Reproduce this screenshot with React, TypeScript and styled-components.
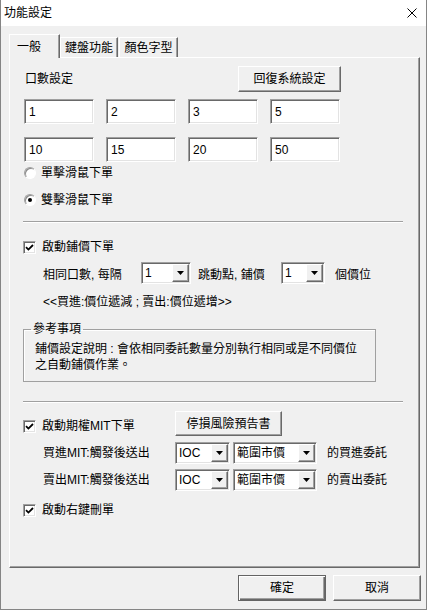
import React from 'react';
import styled, { createGlobalStyle, css } from 'styled-components';

const GlobalStyle = createGlobalStyle`
  html, body {
    margin: 0;
    padding: 0;
    background: #f0f0f0;
  }
  body {
    font-family: "Liberation Sans", "Noto Sans CJK TC", sans-serif;
    font-size: 12px;
    line-height: 16px;
    color: #000;
  }
  * {
    box-sizing: border-box;
  }
`;

const raised = css`
  border: 1px solid;
  border-color: #ffffff #696969 #696969 #ffffff;
  box-shadow: inset -1px -1px #a0a0a0;
`;

const sunken = css`
  border: 1px solid;
  border-color: #a0a0a0 #ffffff #ffffff #a0a0a0;
  box-shadow: inset 1px 1px #696969, inset -1px -1px #e3e3e3;
`;

const Window = styled.div`
  width: 427px;
  height: 610px;
  display: flex;
  flex-direction: column;
  background: #f0f0f0;
  border: 1px solid #858585;
  border-top: none;
`;

const TitleBar = styled.div`
  height: 26px;
  flex: none;
  display: flex;
  align-items: center;
  justify-content: space-between;
  padding: 0 9px 0 3px;
  background: #ffffff;
`;

const Body = styled.div`
  flex: 1;
  display: flex;
  flex-direction: column;
  padding: 8px 6px 0 8px;
`;

const TabStrip = styled.div`
  height: 23px;
  display: flex;
  align-items: flex-end;
  position: relative;
  z-index: 1;
`;

const Tab = styled.div<{ $w: number; $active?: boolean; $ml?: number }>`
  width: ${(p) => p.$w}px;
  height: 20px;
  margin-left: ${(p) => p.$ml ?? 0}px;
  display: flex;
  align-items: center;
  justify-content: center;
  background: #f0f0f0;
  border-top: 1px solid #ffffff;
  border-left: 1px solid #ffffff;
  border-right: 1px solid #696969;
  box-shadow: inset -1px 0 #a0a0a0;
  ${(p) =>
    p.$active &&
    css`
      height: 24px;
      margin-bottom: -1px;
      justify-content: flex-start;
      padding-left: 7px;
    `}
`;

const Panel = styled.div`
  height: 511px;
  display: flex;
  flex-direction: column;
  padding: 8px 0 0 13px;
  ${raised}
`;

const Row = styled.div<{ $mt: number; $h?: number; $pl?: number }>`
  display: flex;
  align-items: center;
  margin-top: ${(p) => p.$mt}px;
  height: ${(p) => p.$h ?? 16}px;
  padding-left: ${(p) => p.$pl ?? 0}px;
`;

const Label = styled.span<{ $w?: number; $ml?: number; $dy?: number }>`
  flex: none;
  white-space: nowrap;
  width: ${(p) => (p.$w ? `${p.$w}px` : 'auto')};
  margin-left: ${(p) => p.$ml ?? 0}px;
  padding-top: ${(p) => p.$dy ?? 0}px;
`;

const Button = styled.div<{ $w: number; $h: number; $default?: boolean }>`
  width: ${(p) => p.$w}px;
  height: ${(p) => p.$h}px;
  flex: none;
  display: flex;
  align-items: center;
  justify-content: center;
  background: #f0f0f0;
  ${raised}
  ${(p) =>
    p.$default &&
    css`
      border: 1px solid #646464;
      box-shadow: inset 1px 1px #ffffff, inset -1px -1px #696969, inset -2px -2px #a0a0a0;
    `}
`;

const InputGrid = styled.div`
  display: grid;
  grid-template-columns: repeat(4, 70px);
  grid-auto-rows: 25px;
  column-gap: 12px;
  row-gap: 13px;
  margin: 7px 0 0 1px;
`;

const TextBox = styled.div`
  display: flex;
  align-items: center;
  padding-left: 4px;
  background: #ffffff;
  ${sunken}
`;

const RadioCircle = styled.span<{ $checked?: boolean }>`
  width: 12px;
  height: 12px;
  flex: none;
  margin-left: 1px;
  border-radius: 50%;
  display: flex;
  align-items: center;
  justify-content: center;
  background: #ffffff;
  border: 1px solid;
  border-color: #a0a0a0 #ffffff #ffffff #a0a0a0;
  box-shadow: inset 1px 1px #8a8a8a;
  &::after {
    content: '';
    width: 4px;
    height: 4px;
    border-radius: 50%;
    background: ${(p) => (p.$checked ? '#000' : 'transparent')};
  }
`;

const CheckBox = styled.span`
  width: 13px;
  height: 13px;
  flex: none;
  display: flex;
  align-items: center;
  justify-content: center;
  background: #ffffff;
  ${sunken}
`;

const CheckItem = styled.div<{ $w?: number; $dy?: number }>`
  display: flex;
  align-items: center;
  gap: 6px;
  width: ${(p) => (p.$w ? `${p.$w}px` : 'auto')};
  padding-top: ${(p) => p.$dy ?? 0}px;
  flex: none;
`;

const RadioItem = styled.div`
  display: flex;
  align-items: center;
  gap: 5px;
`;

const Separator = styled.div<{ $mt: number }>`
  width: 380px;
  height: 2px;
  margin-top: ${(p) => p.$mt}px;
  border-top: 1px solid #a0a0a0;
  border-bottom: 1px solid #ffffff;
`;

const Combo = styled.div<{ $w: number; $ml?: number }>`
  width: ${(p) => p.$w}px;
  height: 22px;
  margin-left: ${(p) => p.$ml ?? 0}px;
  flex: none;
  display: flex;
  background: #ffffff;
  padding: 1px;
  ${sunken}
`;

const ComboValue = styled.span`
  flex: 1;
  display: flex;
  align-items: center;
  padding-left: 2px;
  white-space: nowrap;
  overflow: hidden;
`;

const ComboButton = styled.span`
  width: 17px;
  flex: none;
  display: flex;
  align-items: center;
  justify-content: center;
  background: #f0f0f0;
  ${raised}
`;

const GroupBox = styled.fieldset`
  width: 353px;
  height: 61px;
  margin: 11px 0 0 0;
  padding: 4px 0 0 7px;
  border: 1px solid #a0a0a0;
  box-shadow: inset 1px 1px #ffffff;
  min-inline-size: 0;
`;

const Legend = styled.legend`
  padding: 0 2px;
  line-height: 16px;
`;

const GroupText = styled.div`
  margin-left: 4px;
  line-height: 16px;
`;

const Footer = styled.div`
  display: flex;
  justify-content: flex-end;
  gap: 7px;
  margin: 7px -1px 0 0;
`;

const Triangle = () => (
  <svg width="7" height="4" viewBox="0 0 7 4">
    <polygon points="0,0 7,0 3.5,4" fill="#000" />
  </svg>
);

const Check = () => (
  <svg width="9" height="9" viewBox="0 0 9 9">
    <path d="M1 4.2 L3.4 6.6 L8 2" stroke="#000" strokeWidth="1.8" fill="none" />
  </svg>
);

const Dropdown = ({ w, value, ml }: { w: number; value: string; ml?: number }) => (
  <Combo $w={w} $ml={ml}>
    <ComboValue>{value}</ComboValue>
    <ComboButton>
      <Triangle />
    </ComboButton>
  </Combo>
);

const CheckLabel = ({ text, w, dy }: { text: string; w?: number; dy?: number }) => (
  <CheckItem $w={w} $dy={dy}>
    <CheckBox>
      <Check />
    </CheckBox>
    <span>{text}</span>
  </CheckItem>
);

const quantities = ['1', '2', '3', '5', '10', '15', '20', '50'];

export default function App() {
  return (
    <>
      <GlobalStyle />
      <Window>
        <TitleBar>
          <span>功能設定</span>
          <svg width="10" height="10" viewBox="0 0 10 10">
            <path d="M0.5 0.5 L9.5 9.5 M9.5 0.5 L0.5 9.5" stroke="#000" strokeWidth="1" />
          </svg>
        </TitleBar>
        <Body>
          <TabStrip>
            <Tab $w={51} $active>
              一般
            </Tab>
            <Tab $w={58}>鍵盤功能</Tab>
            <Tab $w={59} $ml={1}>
              顏色字型
            </Tab>
          </TabStrip>
          <Panel>
            <Row $mt={0} $h={26}>
              <Label $w={213} $ml={2}>
                口數設定
              </Label>
              <Button $w={103} $h={26}>
                回復系統設定
              </Button>
            </Row>
            <InputGrid>
              {quantities.map((q) => (
                <TextBox key={q}>{q}</TextBox>
              ))}
            </InputGrid>
            <Row $mt={3}>
              <RadioItem>
                <RadioCircle />
                <span>單擊滑鼠下單</span>
              </RadioItem>
            </Row>
            <Row $mt={11}>
              <RadioItem>
                <RadioCircle $checked />
                <span>雙擊滑鼠下單</span>
              </RadioItem>
            </Row>
            <Separator $mt={13} />
            <Row $mt={16}>
              <CheckLabel text="啟動鋪價下單" />
            </Row>
            <Row $mt={7} $h={22} $pl={20}>
              <Label $w={98} $dy={3}>
                相同口數, 每隔
              </Label>
              <Dropdown w={50} value="1" />
              <Label $w={83} $ml={7} $dy={3}>
                跳動點, 鋪價
              </Label>
              <Dropdown w={44} value="1" />
              <Label $ml={10} $dy={3}>
                個價位
              </Label>
            </Row>
            <Row $mt={10} $pl={20}>
              <Label>&lt;&lt;買進:價位遞減 ; 賣出:價位遞增&gt;&gt;</Label>
            </Row>
            <GroupBox>
              <Legend>參考事項</Legend>
              <GroupText>
                鋪價設定說明 : 會依相同委託數量分別執行相同或是不同價位
                <br />
                之自動鋪價作業。
              </GroupText>
            </GroupBox>
            <Separator $mt={19} />
            <Row $mt={8} $h={25}>
              <CheckLabel text="啟動期權MIT下單" w={152} dy={5} />
              <Button $w={107} $h={25}>
                停損風險預告書
              </Button>
            </Row>
            <Row $mt={6} $h={22} $pl={20}>
              <Label $w={132}>買進MIT:觸發後送出</Label>
              <Dropdown w={55} value="IOC" />
              <Dropdown w={84} value="範圍市價" ml={3} />
              <Label $ml={10}>的買進委託</Label>
            </Row>
            <Row $mt={5} $h={22} $pl={20}>
              <Label $w={132}>賣出MIT:觸發後送出</Label>
              <Dropdown w={55} value="IOC" />
              <Dropdown w={84} value="範圍市價" ml={3} />
              <Label $ml={10}>的賣出委託</Label>
            </Row>
            <Row $mt={11}>
              <CheckLabel text="啟動右鍵刪單" />
            </Row>
          </Panel>
          <Footer>
            <Button $w={88} $h={26} $default>
              確定
            </Button>
            <Button $w={88} $h={26}>
              取消
            </Button>
          </Footer>
        </Body>
      </Window>
    </>
  );
}
